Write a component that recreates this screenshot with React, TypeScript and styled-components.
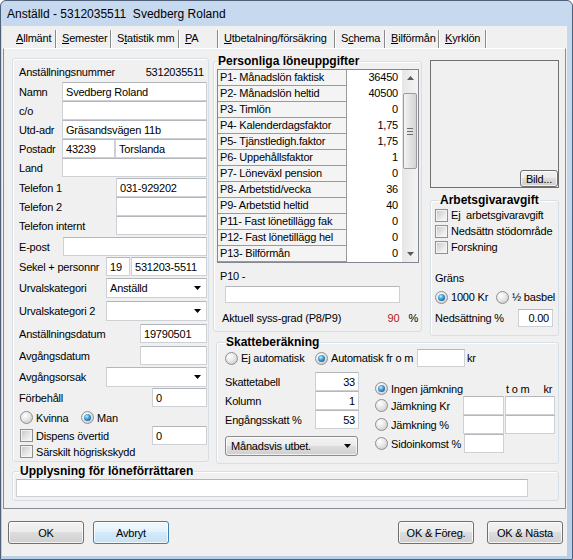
import React from "react";
import styled, { createGlobalStyle } from "styled-components";

const GlobalStyle = createGlobalStyle`
  html, body {
    margin: 0;
    padding: 0;
    background: #ffffff;
  }
  body {
    font-family: "Liberation Sans", Arial, sans-serif;
    font-size: 11px;
    letter-spacing: -0.2px;
    color: #000;
  }
  * {
    box-sizing: border-box;
  }
`;

const Window = styled.div`
  width: 573px;
  height: 560px;
  display: flex;
  flex-direction: column;
  background: linear-gradient(#c6d9ef, #b9cfe8);
  border: 1px solid #4d6078;
  border-radius: 6px 6px 0 0;
  overflow: hidden;
`;

const TitleBar = styled.div`
  height: 25px;
  flex: none;
  display: flex;
  align-items: center;
  padding-left: 6px;
  font-size: 12px;
  letter-spacing: 0;
  white-space: pre;
  color: #000;
`;

const Client = styled.div`
  flex: 1;
  margin: 0 5px 3px 1px;
  background: #f0f0f0;
  display: flex;
  flex-direction: column;
`;

const TabStrip = styled.div`
  height: 22px;
  flex: none;
  display: flex;
  align-items: flex-end;
  padding-left: 8px;
`;

const Tab = styled.div<{ $w: number }>`
  width: ${(p) => p.$w}px;
  height: 18px;
  line-height: 17px;
  padding-left: 6px;
  border-right: 1px solid #8a8a8a;
  box-shadow: 1px 0 0 #ffffff;
  white-space: nowrap;
`;

const Panel = styled.div`
  height: 461px;
  flex: none;
  margin: 0 1px;
  border: 1px solid #898c95;
  border-top-color: #ffffff;
  padding: 6px 6px 0 8px;
`;

const PanelGrid = styled.div`
  display: grid;
  grid-template-columns: 197px 346px;
  column-gap: 4px;
  align-items: start;
`;

const Group = styled.fieldset<{ $w: number; $h: number; $pl?: number; $mt?: number }>`
  width: ${(p) => p.$w}px;
  height: ${(p) => p.$h}px;
  margin: ${(p) => p.$mt ?? 0}px 0 0 0;
  padding: 0 0 0 ${(p) => p.$pl ?? 0}px;
  border: 1px solid #d5dfe5;
  border-radius: 3px;
  box-shadow: inset 1px 1px 0 #ffffff;
  min-width: 0;
`;

const Legend = styled.legend<{ $ml?: number }>`
  font-weight: bold;
  font-size: 12px;
  letter-spacing: 0;
  line-height: 13px;
  padding: 0 1px;
  margin-left: ${(p) => p.$ml ?? 0}px;
`;

const Row = styled.div<{ $h: number; $mt?: number; $pl?: number }>`
  display: flex;
  align-items: center;
  height: ${(p) => p.$h}px;
  margin-top: ${(p) => p.$mt ?? 0}px;
  padding-left: ${(p) => p.$pl ?? 6}px;
`;

const SpreadRow = styled(Row)`
  justify-content: space-between;
  padding-right: 4px;
`;

const Label = styled.span<{ $w?: number }>`
  flex: none;
  width: ${(p) => (p.$w ? `${p.$w}px` : "auto")};
  white-space: nowrap;
  overflow: hidden;
`;

const Field = styled.input<{ $w: number; $h?: number; $right?: boolean; $ml?: number }>`
  flex: none;
  width: ${(p) => p.$w}px;
  height: ${(p) => p.$h ?? 19}px;
  margin: 0 0 0 ${(p) => p.$ml ?? 0}px;
  padding: 0 3px;
  border: 1px solid #cdd0d4;
  border-top-color: #b3b6bb;
  background: #ffffff;
  font: inherit;
  letter-spacing: inherit;
  color: #000;
  text-align: ${(p) => (p.$right ? "right" : "left")};
  outline: none;
`;

const Combo = styled.div<{ $w: number }>`
  flex: none;
  width: ${(p) => p.$w}px;
  height: 20px;
  display: flex;
  align-items: center;
  justify-content: space-between;
  padding: 0 5px 0 3px;
  border: 1px solid #cdd0d4;
  border-top-color: #b3b6bb;
  background: #ffffff;
`;

const ButtonCombo = styled.div<{ $w: number }>`
  width: ${(p) => p.$w}px;
  height: 20px;
  display: flex;
  align-items: center;
  justify-content: space-between;
  padding: 0 6px 0 5px;
  border: 1px solid #8a8a8a;
  border-radius: 3px;
  background: linear-gradient(#f2f2f2 0%, #ebebeb 50%, #dddddd 50%, #cfcfcf 100%);
  box-shadow: inset 0 0 0 1px rgba(255, 255, 255, 0.7);
`;

const CheckBox = styled.span`
  flex: none;
  width: 13px;
  height: 13px;
  border: 1px solid #8e8f8f;
  background: linear-gradient(135deg, #c6c6c6 0%, #eeeeee 70%, #f6f6f6 100%);
  box-shadow: inset 0 0 0 1px #f4f4f4;
`;

const RadioDot = styled.span<{ $on?: boolean }>`
  flex: none;
  width: 13px;
  height: 13px;
  border-radius: 50%;
  border: 1px solid #8e8f8f;
  background: radial-gradient(circle at 35% 30%, #ffffff 0%, #e8e8e8 45%, #c2c2c2 100%);
  display: flex;
  align-items: center;
  justify-content: center;
  &::after {
    content: "";
    width: 7px;
    height: 7px;
    border-radius: 50%;
    display: ${(p) => (p.$on ? "block" : "none")};
    background: radial-gradient(circle at 40% 35%, #bdeeff 0%, #3b95d2 45%, #0b4677 100%);
  }
`;

const Choice = styled.label<{ $w?: number }>`
  flex: none;
  display: flex;
  align-items: center;
  gap: 3px;
  width: ${(p) => (p.$w ? `${p.$w}px` : "auto")};
  white-space: pre;
`;

const Button = styled.button<{ $primary?: boolean }>`
  width: 76px;
  height: 23px;
  padding: 0;
  font: inherit;
  letter-spacing: inherit;
  color: #000;
  border: 1px solid ${(p) => (p.$primary ? "#3c7fb1" : "#707070")};
  border-radius: 3px;
  background: ${(p) =>
    p.$primary
      ? "linear-gradient(#f2f9fd 0%, #e3f1fb 50%, #d3eaf8 50%, #c4e2f5 100%)"
      : "linear-gradient(#f2f2f2 0%, #ebebeb 50%, #dddddd 50%, #cfcfcf 100%)"};
  box-shadow: inset 0 0 0 1px rgba(255, 255, 255, 0.75);
`;

const SmallButton = styled(Button)`
  width: 38px;
  height: 17px;
  line-height: 14px;
`;

/* left column */
const LeftGroup = styled(Group)`
  padding-right: 0;
`;

/* middle: personal pay table */
const TopRow = styled.div`
  display: flex;
  gap: 8px;
  align-items: flex-start;
`;

const RightArea = styled.div`
  display: flex;
  flex-direction: column;
`;

const PayTable = styled.div`
  margin-top: 1px;
  width: 202px;
  display: flex;
  border: 1px solid #828790;
  background: #ffffff;
`;

const PayCells = styled.div`
  display: grid;
  grid-template-columns: 129px 55px;
  grid-auto-rows: 16px;
`;

const PayLabel = styled.div`
  background: #f4f4f4;
  border-right: 1px solid #9a9a9a;
  border-bottom: 1px solid #9a9a9a;
  padding-left: 2px;
  line-height: 15px;
  white-space: nowrap;
  overflow: hidden;
`;

const PayValue = styled.div`
  text-align: right;
  padding-right: 4px;
  line-height: 15px;
`;

const ScrollBar = styled.div`
  width: 16px;
  display: flex;
  flex-direction: column;
  background: linear-gradient(90deg, #e6e6e6, #f4f4f4);
`;

const ScrollArrow = styled.div`
  height: 16px;
  display: flex;
  align-items: center;
  justify-content: center;
`;

const ScrollTrack = styled.div`
  flex: 1;
`;

const ScrollThumb = styled.div`
  margin: 7px 1px 0 1px;
  height: 76px;
  border: 1px solid #9b9b9b;
  border-radius: 2px;
  background: linear-gradient(90deg, #f4f4f4, #e2e2e2 55%, #d4d4d4);
  display: flex;
  align-items: center;
  justify-content: center;
`;

const Grip = styled.div`
  width: 6px;
  height: 7px;
  background: repeating-linear-gradient(#6e6e6e 0 1px, transparent 1px 3px);
`;

const PctRow = styled(Row)`
  padding-right: 3px;
`;

const Grow = styled.span`
  flex: 1;
  white-space: nowrap;
`;

const RedValue = styled.span`
  color: #b01d1d;
`;

const Pct = styled.span`
  margin-left: 9px;
`;

/* right column */
const RightCol = styled.div`
  width: 129px;
  margin-top: 5px;
  display: flex;
  flex-direction: column;
`;

const PictureBox = styled.div`
  width: 129px;
  height: 128px;
  border: 1px solid #6f6f6f;
  display: flex;
  justify-content: flex-end;
  align-items: flex-end;
`;

/* tax section */
const TaxCols = styled.div`
  display: flex;
  margin-top: 5px;
`;

const TaxLeft = styled.div`
  width: 134px;
  display: flex;
  flex-direction: column;
`;

const TaxRight = styled.div`
  margin-left: 16px;
  display: flex;
  flex-direction: column;
`;

const Kr = styled.span<{ $ml?: number }>`
  margin-left: ${(p) => p.$ml ?? 2}px;
  white-space: nowrap;
`;

/* footer */
const Footer = styled.div`
  flex: 1;
  display: flex;
  align-items: flex-start;
  justify-content: space-between;
  padding: 12px 4px 0 6px;
`;

const ButtonGroup = styled.div<{ $gap: number }>`
  display: flex;
  gap: ${(p) => p.$gap}px;
`;

function Arrow({ color = "#000" }: { color?: string }) {
  return (
    <svg width="7" height="4" viewBox="0 0 7 4">
      <path d="M0 0 H7 L3.5 4 Z" fill={color} />
    </svg>
  );
}

function UpArrow() {
  return (
    <svg width="7" height="4" viewBox="0 0 7 4">
      <path d="M0 4 H7 L3.5 0 Z" fill="#5a5a5a" />
    </svg>
  );
}

const tabs = [
  { label: "Allmänt", k: 0, w: 46 },
  { label: "Semester", k: 0, w: 55 },
  { label: "Statistik mm", k: 1, w: 68 },
  { label: "PA", k: 0, w: 39 },
  { label: "Utbetalning/försäkring", k: 0, w: 117 },
  { label: "Schema", k: 1, w: 50 },
  { label: "Bilförmån", k: 0, w: 54 },
  { label: "Kyrklön", k: 0, w: 47 },
];

const payRows: [string, string][] = [
  ["P1- Månadslön faktisk", "36450"],
  ["P2- Månadslön heltid", "40500"],
  ["P3- Timlön", "0"],
  ["P4- Kalenderdagsfaktor", "1,75"],
  ["P5- Tjänstledigh.faktor", "1,75"],
  ["P6- Uppehållsfaktor", "1"],
  ["P7- Löneväxl pension", "0"],
  ["P8- Arbetstid/vecka", "36"],
  ["P9- Arbetstid heltid", "40"],
  ["P11- Fast lönetillägg fak", "0"],
  ["P12- Fast lönetillägg hel", "0"],
  ["P13- Bilförmån", "0"],
];

export default function App() {
  return (
    <>
      <GlobalStyle />
      <Window>
        <TitleBar>Anställd - 5312035511  Svedberg Roland</TitleBar>
        <Client>
          <TabStrip>
            {tabs.map((t) => (
              <Tab key={t.label} $w={t.w}>
                {t.label.slice(0, t.k)}
                <u>{t.label[t.k]}</u>
                {t.label.slice(t.k + 1)}
              </Tab>
            ))}
          </TabStrip>

          <Panel>
            <PanelGrid>
              <LeftGroup $w={197} $h={404} $mt={3}>
                <SpreadRow $h={18} $mt={4}>
                  <span>Anställningsnummer</span>
                  <span>5312035511</span>
                </SpreadRow>
                <Row $h={19} $mt={1}>
                  <Label $w={43}>Namn</Label>
                  <Field $w={145} readOnly defaultValue="Svedberg Roland" />
                </Row>
                <Row $h={19}>
                  <Label $w={43}>c/o</Label>
                  <Field $w={145} readOnly defaultValue="" />
                </Row>
                <Row $h={19}>
                  <Label $w={43}>Utd-adr</Label>
                  <Field $w={145} readOnly defaultValue="Gräsandsvägen 11b" />
                </Row>
                <Row $h={19}>
                  <Label $w={43}>Postadr</Label>
                  <Field $w={53} readOnly defaultValue="43239" />
                  <Field $w={92} readOnly defaultValue="Torslanda" />
                </Row>
                <Row $h={19}>
                  <Label $w={43}>Land</Label>
                  <Field $w={145} readOnly defaultValue="" />
                </Row>
                <Row $h={19} $mt={1}>
                  <Label $w={97}>Telefon 1</Label>
                  <Field $w={91} readOnly defaultValue="031-929202" />
                </Row>
                <Row $h={19}>
                  <Label $w={97}>Telefon 2</Label>
                  <Field $w={91} readOnly defaultValue="" />
                </Row>
                <Row $h={19}>
                  <Label $w={97}>Telefon internt</Label>
                  <Field $w={91} readOnly defaultValue="" />
                </Row>
                <Row $h={19} $mt={2}>
                  <Label $w={44}>E-post</Label>
                  <Field $w={144} readOnly defaultValue="" />
                </Row>
                <Row $h={19} $mt={1}>
                  <Label $w={87}>Sekel + personnr</Label>
                  <Field $w={24} readOnly defaultValue="19" />
                  <Field $w={76} $ml={1} readOnly defaultValue="531203-5511" />
                </Row>
                <Row $h={20} $mt={2}>
                  <Label $w={87}>Urvalskategori</Label>
                  <Combo $w={101}>
                    <span>Anställd</span>
                    <Arrow />
                  </Combo>
                </Row>
                <Row $h={20} $mt={3}>
                  <Label $w={87}>Urvalskategori 2</Label>
                  <Combo $w={101}>
                    <span />
                    <Arrow />
                  </Combo>
                </Row>
                <Row $h={19} $mt={3}>
                  <Label $w={121}>Anställningsdatum</Label>
                  <Field $w={67} readOnly defaultValue="19790501" />
                </Row>
                <Row $h={19} $mt={3}>
                  <Label $w={121}>Avgångsdatum</Label>
                  <Field $w={67} readOnly defaultValue="" />
                </Row>
                <Row $h={20} $mt={2}>
                  <Label $w={87}>Avgångsorsak</Label>
                  <Combo $w={101}>
                    <span />
                    <Arrow />
                  </Combo>
                </Row>
                <Row $h={19} $mt={1}>
                  <Label $w={133}>Förbehåll</Label>
                  <Field $w={55} readOnly defaultValue="0" />
                </Row>
                <Row $h={13} $mt={4} $pl={7}>
                  <Choice $w={61}>
                    <RadioDot />
                    Kvinna
                  </Choice>
                  <Choice>
                    <RadioDot $on />
                    Man
                  </Choice>
                </Row>
                <Row $h={19} $mt={2} $pl={7}>
                  <Choice $w={132}>
                    <CheckBox />
                    Dispens övertid
                  </Choice>
                  <Field $w={55} readOnly defaultValue="0" />
                </Row>
                <Row $h={13} $pl={7}>
                  <Choice>
                    <CheckBox />
                    Särskilt högriskskydd
                  </Choice>
                </Row>
              </LeftGroup>

              <RightArea>
                <TopRow>
                  <Group $w={209} $h={277} $pl={3}>
                    <Legend>Personliga löneuppgifter</Legend>
                    <PayTable>
                      <PayCells>
                        {payRows.map(([label, value]) => (
                          <React.Fragment key={label}>
                            <PayLabel>{label}</PayLabel>
                            <PayValue>{value}</PayValue>
                          </React.Fragment>
                        ))}
                      </PayCells>
                      <ScrollBar>
                        <ScrollArrow>
                          <UpArrow />
                        </ScrollArrow>
                        <ScrollTrack>
                          <ScrollThumb>
                            <Grip />
                          </ScrollThumb>
                        </ScrollTrack>
                        <ScrollArrow>
                          <Arrow color="#5a5a5a" />
                        </ScrollArrow>
                      </ScrollBar>
                    </PayTable>
                    <Row $h={14} $mt={6} $pl={3}>
                      P10 -
                    </Row>
                    <Field $w={175} $h={17} $ml={8} readOnly defaultValue="" style={{ marginTop: 3 }} />
                    <PctRow $h={14} $mt={8} $pl={5}>
                      <Grow>Aktuell syss-grad (P8/P9)</Grow>
                      <RedValue>90</RedValue>
                      <Pct>%</Pct>
                    </PctRow>
                  </Group>

                  <RightCol>
                    <PictureBox>
                      <SmallButton>Bild...</SmallButton>
                    </PictureBox>
                    <Group $w={129} $h={142} $pl={4} $mt={6}>
                      <Legend $ml={4}>Arbetsgivaravgift</Legend>
                      <Row $h={16} $pl={0}>
                        <Choice>
                          <CheckBox />
                          {"Ej  arbetsgivaravgift"}
                        </Choice>
                      </Row>
                      <Row $h={16} $pl={0}>
                        <Choice>
                          <CheckBox />
                          Nedsättn stödområde
                        </Choice>
                      </Row>
                      <Row $h={16} $pl={0}>
                        <Choice>
                          <CheckBox />
                          Forskning
                        </Choice>
                      </Row>
                      <Row $h={14} $mt={16} $pl={0}>
                        Gräns
                      </Row>
                      <Row $h={14} $mt={5} $pl={0}>
                        <Choice $w={61}>
                          <RadioDot $on />
                          1000 Kr
                        </Choice>
                        <Choice>
                          <RadioDot />
                          ½ basbel
                        </Choice>
                      </Row>
                      <Row $h={18} $mt={5} $pl={0}>
                        <Label $w={83}>Nedsättning %</Label>
                        <Field $w={35} $h={18} $right readOnly defaultValue="0.00" />
                      </Row>
                    </Group>
                  </RightCol>
                </TopRow>

                <Group $w={343} $h={128} $pl={8} style={{ marginLeft: 3 }}>
                  <Legend>Skatteberäkning</Legend>
                  <Row $h={18} $pl={0}>
                    <Choice $w={90}>
                      <RadioDot />
                      Ej automatisk
                    </Choice>
                    <Choice $w={102}>
                      <RadioDot $on />
                      Automatisk fr o m
                    </Choice>
                    <Field $w={48} $h={18} readOnly defaultValue="" />
                    <Kr>kr</Kr>
                  </Row>
                  <TaxCols>
                    <TaxLeft>
                      <Row $h={19} $pl={0}>
                        <Label $w={90}>Skattetabell</Label>
                        <Field $w={44} $right readOnly defaultValue="33" />
                      </Row>
                      <Row $h={19} $pl={0}>
                        <Label $w={90}>Kolumn</Label>
                        <Field $w={44} $right readOnly defaultValue="1" />
                      </Row>
                      <Row $h={19} $pl={0}>
                        <Label $w={90}>Engångsskatt %</Label>
                        <Field $w={44} $right readOnly defaultValue="53" />
                      </Row>
                      <Row $h={20} $mt={7} $pl={0}>
                        <ButtonCombo $w={133}>
                          <span>Månadsvis utbet.</span>
                          <Arrow />
                        </ButtonCombo>
                      </Row>
                    </TaxLeft>
                    <TaxRight>
                      <Row $h={13} $mt={10} $pl={0}>
                        <Choice $w={131}>
                          <RadioDot $on />
                          Ingen jämkning
                        </Choice>
                        <span>t o m</span>
                        <Kr $ml={14}>kr</Kr>
                      </Row>
                      <Row $h={19} $mt={1} $pl={0}>
                        <Choice $w={88}>
                          <RadioDot />
                          Jämkning Kr
                        </Choice>
                        <Field $w={41} readOnly defaultValue="" />
                        <Field $w={50} $ml={1} readOnly defaultValue="" />
                      </Row>
                      <Row $h={19} $pl={0}>
                        <Choice $w={88}>
                          <RadioDot />
                          Jämkning %
                        </Choice>
                        <Field $w={41} readOnly defaultValue="" />
                        <Field $w={50} $ml={1} readOnly defaultValue="" />
                      </Row>
                      <Row $h={19} $pl={0}>
                        <Choice $w={89}>
                          <RadioDot />
                          Sidoinkomst %
                        </Choice>
                        <Field $w={40} readOnly defaultValue="" />
                      </Row>
                    </TaxRight>
                  </TaxCols>
                </Group>
              </RightArea>

              <Group $w={547} $h={36} $pl={3} $mt={1} style={{ gridColumn: "1 / -1" }}>
                <Legend $ml={3}>Upplysning för löneförrättaren</Legend>
                <Field $w={512} $h={18} readOnly defaultValue="" style={{ marginTop: 1 }} />
              </Group>
            </PanelGrid>
          </Panel>

          <Footer>
            <ButtonGroup $gap={9}>
              <Button>OK</Button>
              <Button $primary>Avbryt</Button>
            </ButtonGroup>
            <ButtonGroup $gap={13}>
              <Button>OK &amp; Föreg.</Button>
              <Button>OK &amp; Nästa</Button>
            </ButtonGroup>
          </Footer>
        </Client>
      </Window>
    </>
  );
}
